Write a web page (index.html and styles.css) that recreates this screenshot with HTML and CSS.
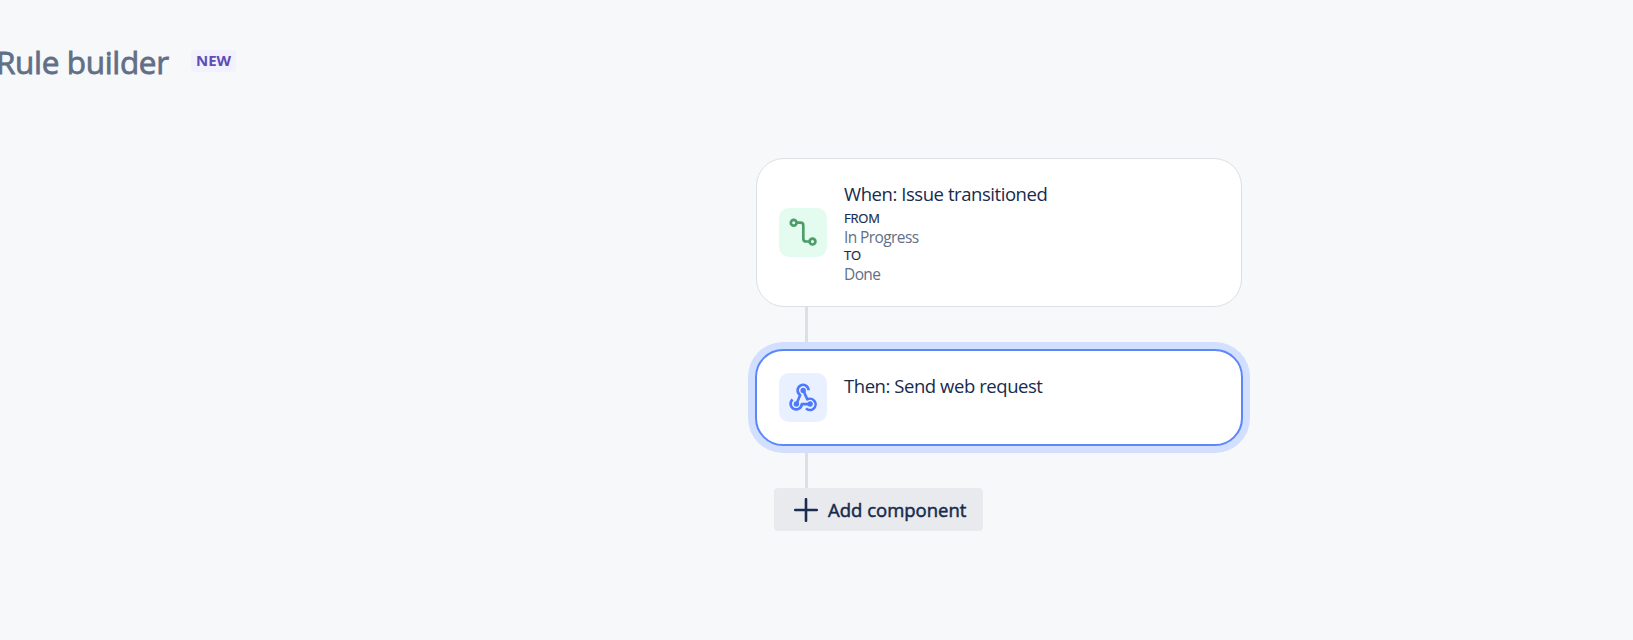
FILE: index.html
```html
<!DOCTYPE html>
<html lang="en">
<head>
<meta charset="utf-8">
<title>Rule builder</title>
<link rel="stylesheet" href="styles.css">
</head>
<body>
<header class="header">
  <h1 class="title">Rule builder</h1>
  <span class="badge">NEW</span>
</header>
<main class="flow">
  <section class="card trigger">
    <div class="icon icon-green">
      <svg width="48" height="49" viewBox="0 0 48 49" fill="none" stroke="#4f9d69" stroke-width="2.7">
        <circle cx="14.7" cy="14.7" r="2.9"/>
        <path d="M17.7 14.7h3.8q2.8 0 2.8 2.8v13.2q0 2.8 2.8 2.8h3.4"/>
        <circle cx="33.5" cy="33.6" r="2.9"/>
      </svg>
    </div>
    <div class="body">
      <div class="name">When: Issue transitioned</div>
      <div class="label">FROM</div>
      <div class="value">In Progress</div>
      <div class="label">TO</div>
      <div class="value">Done</div>
    </div>
  </section>
  <div class="line line-first"></div>
  <section class="card selected">
    <div class="icon icon-blue">
      <svg width="48" height="49" viewBox="0 0 48 49" fill="none" stroke="#4d79fa" stroke-width="2.6" stroke-linejoin="round">
        <path d="M29.6 17.2A5.5 5.5 0 1 0 21.2 22L17.6 30.7"/>
        <path d="M13.6 26.5A5.6 5.6 0 1 0 22.8 31.1H31.1"/>
        <path d="M24.3 17.4L28.3 26.4A5.6 5.6 0 1 1 27 35.3"/>
        <g fill="#4d79fa" stroke="none"><circle cx="24.2" cy="17.4" r="2.7"/><circle cx="17.4" cy="31" r="2.7"/><circle cx="31.1" cy="31" r="2.7"/></g>
      </svg>
    </div>
    <div class="body"><div class="name">Then: Send web request</div></div>
  </section>
  <div class="line line-second"></div>
  <button class="add">
    <svg width="24" height="24" viewBox="0 0 24 24" stroke="#1c2b50" stroke-width="2.6" stroke-linecap="round"><path d="M12 1.2v21.6M1.2 12h21.6"/></svg>
    <span class="add-label">Add component</span>
  </button>
</main>
</body>
</html>
```
FILE: styles.css
```css
* { box-sizing: border-box; }
body {
  margin: 0;
  height: 640px;
  overflow: hidden;
  background: #f7f8fa;
  font-family: "Open Sans", "Noto Sans", sans-serif;
  color: #172b4d;
}
.header {
  display: flex;
  align-items: flex-start;
  height: 158px;
  padding-top: 41px;
}
.title {
  width: 191px;
  margin: 0 0 0 -4px;
  flex: none;
  font-size: 31.5px;
  line-height: 42px;
  font-weight: 400;
  letter-spacing: -0.35px;
  -webkit-text-stroke: 0.8px #626f86;
  color: #626f86;
  white-space: nowrap;
}
.badge {
  margin: 9px 0 0 4px;
  width: 45px;
  height: 22px;
  border-radius: 4px;
  background: #f3f0ff;
  color: #5e4db2;
  font-size: 15px;
  line-height: 21px;
  font-weight: 700;
  text-align: center;
}
.flow {
  display: flex;
  flex-direction: column;
  margin-left: 756px;
  width: 486px;
}
.card {
  display: flex;
  background: #fff;
  border-radius: 28px;
}
.trigger {
  height: 149px;
  border: 1px solid #dcdfe4;
  padding: 49px 0 0 22px;
}
.selected {
  height: 97px;
  width: 488px;
  margin: 0 0 0 -1px;
  border: 2px solid #5b87fb;
  box-shadow: 0 0 0 7px #d2dfff;
  padding: 22px 0 0 22px;
}
.icon {
  flex: none;
  width: 48px;
  height: 49px;
  border-radius: 10px;
}
.icon svg { display: block; }
.icon-green { background: #e3fcef; }
.icon-blue { background: #e9f0ff; }
.body {
  margin-left: 17px;
  white-space: nowrap;
}
.trigger .body { margin-top: -27px; }
.name {
  font-size: 18.5px;
  line-height: 26px;
  letter-spacing: -0.44px;
}
.name + .label { margin-top: 2px; }
.label {
  font-size: 13px;
  line-height: 19px;
  letter-spacing: -0.2px;
  -webkit-text-stroke: 0.2px #172b4d;
}
.value {
  font-size: 15.5px;
  line-height: 18px;
  letter-spacing: -0.6px;
  color: #626f86;
}
.line {
  width: 3px;
  margin-left: 49px;
  background: #dcdfe4;
}
.line-first { height: 35px; margin-bottom: 7px; }
.line-second { height: 35px; margin-top: 7px; }
.add {
  display: flex;
  align-items: center;
  width: 209px;
  height: 43px;
  margin-left: 18px;
  padding: 0 0 0 20px;
  border: 0;
  border-radius: 4px;
  background: #e9eaee;
  color: #172b4d;
  font: 400 18.5px/26px "Open Sans", "Noto Sans", sans-serif;
  -webkit-text-stroke: 0.5px #172b4d;
  white-space: nowrap;
}
.add svg { flex: none; }
.add-label { margin-left: 10px; }
```
